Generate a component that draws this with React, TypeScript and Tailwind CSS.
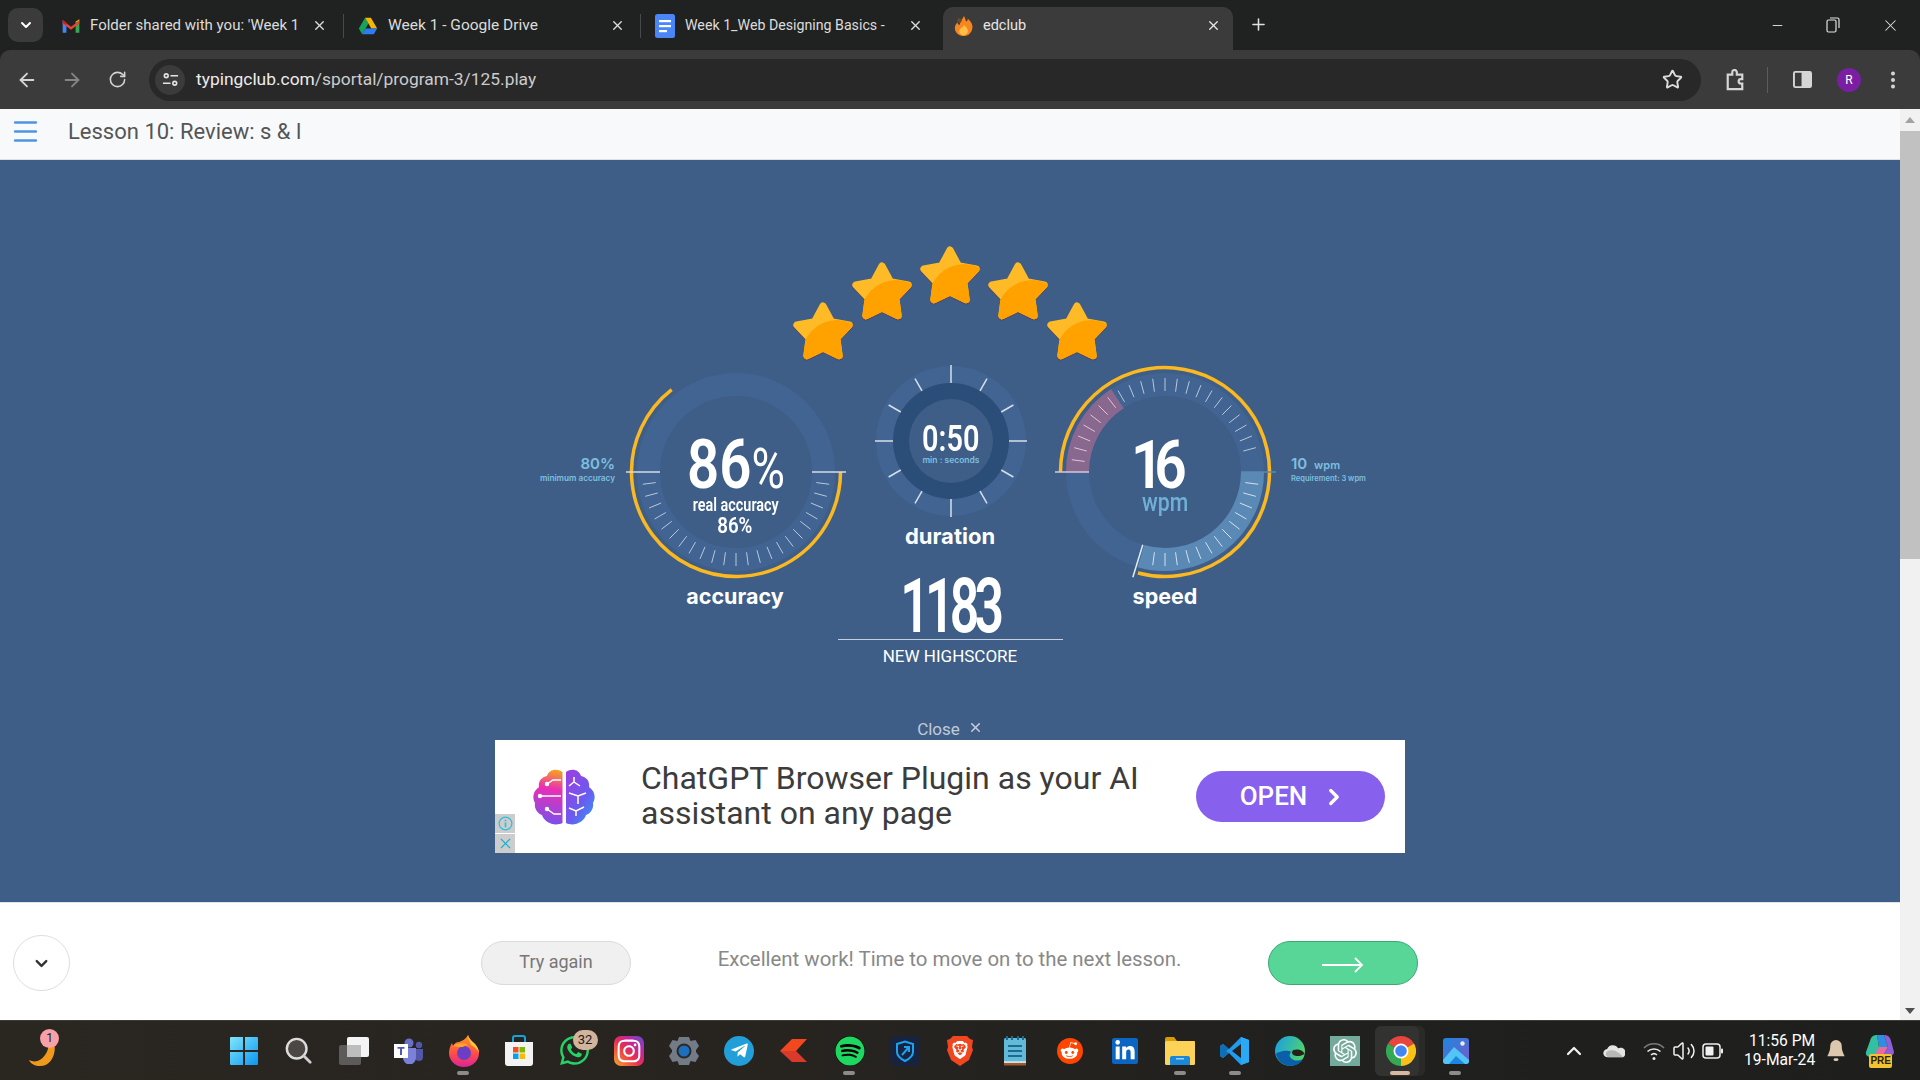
import { ArrowLeft, ArrowRight, ChevronDown, ChevronRight, ChevronUp, EllipsisVertical, Menu, Minus, Plus, RotateCw, Star, Volume2, X } from 'lucide-react';
import { FaInstagram, FaLinkedinIn, FaRedditAlien, FaSpotify, FaTelegramPlane, FaWhatsapp } from 'react-icons/fa';
import { SiBrave, SiOpenai } from 'react-icons/si';
import type { ReactNode } from 'react';

const pt = (cx: number, cy: number, r: number, deg: number) => {
  const a = (deg * Math.PI) / 180;
  return { x: cx + r * Math.cos(a), y: cy + r * Math.sin(a) };
};

const arc = (cx: number, cy: number, r: number, from: number, to: number) => {
  const a = pt(cx, cy, r, from);
  const b = pt(cx, cy, r, to);
  return `M${a.x} ${a.y}A${r} ${r} 0 ${to - from > 180 ? 1 : 0} 1 ${b.x} ${b.y}`;
};

function Tick({ cx, cy, r1, r2, deg, color, w = 1 }: { cx: number; cy: number; r1: number; r2: number; deg: number; color: string; w?: number }) {
  const a = pt(cx, cy, r1, deg);
  const b = pt(cx, cy, r2, deg);
  return <line x1={a.x} y1={a.y} x2={b.x} y2={b.y} stroke={color} strokeWidth={w} />;
}

const starPoints = () => {
  const out: string[] = [];
  for (let i = 0; i < 10; i++) {
    const p = pt(30, 31.5, i % 2 ? 14.5 : 27.5, -90 + i * 36);
    out.push(`${p.x},${p.y}`);
  }
  return out.join(' ');
};

function RatingStar({ id }: { id: string }) {
  const points = starPoints();
  return (
    <svg viewBox="0 0 60 58" className="h-[58px] w-[60px] overflow-visible">
      <defs>
        <mask id={id}>
          <polygon points={points} fill="#fff" stroke="#fff" strokeWidth="7" strokeLinejoin="round" />
        </mask>
      </defs>
      <polygon points={points} fill="#5a3f5c" stroke="#5a3f5c" strokeWidth="7" strokeLinejoin="round" transform="translate(0 1.2)" />
      <polygon points={points} fill="#ffbb27" stroke="#ffbb27" strokeWidth="7" strokeLinejoin="round" />
      <circle cx="44" cy="53" r="35" fill="#ffa200" mask={`url(#${id})`} />
    </svg>
  );
}

function AccuracyGauge() {
  const cx = 114;
  const cy = 113;
  const ticks = Array.from({ length: 23 }, (_, i) => 7.5 + i * 7.5);
  return (
    <svg viewBox="0 0 226 226" className="h-[226px] w-[226px]">
      <circle cx={cx} cy={cy} r="87.5" fill="none" stroke="#416492" strokeWidth="23" />
      {ticks.map((d) => (
        <Tick key={d} cx={cx} cy={cy} r1={81} r2={94} deg={d} color="#b9c8da" />
      ))}
      <path d={arc(cx, cy, 104.5, 0, 232)} fill="none" stroke="#fbb821" strokeWidth="3.5" />
      <line x1={cx - 110} y1={cy} x2={cx - 76} y2={cy} stroke="#d5dce6" strokeWidth="1.5" />
      <line x1={cx + 76} y1={cy} x2={cx + 110} y2={cy} stroke="#d5dce6" strokeWidth="1.5" />
    </svg>
  );
}

function SpeedGauge() {
  const cx = 113;
  const cy = 113;
  const pinkTicks = [187.5, 195, 202.5, 210, 217.5, 225, 232.5];
  const upper = Array.from({ length: 15 }, (_, i) => 240 + i * 7.5);
  const lower = Array.from({ length: 13 }, (_, i) => 7.5 + i * 7.5);
  return (
    <svg viewBox="0 0 226 226" className="h-[226px] w-[226px]">
      <circle cx={cx} cy={cy} r="87.5" fill="none" stroke="#416492" strokeWidth="23" />
      <path d={arc(cx, cy, 87.5, 180, 237)} fill="none" stroke="#89688f" strokeWidth="23" />
      <path d={arc(cx, cy, 87.5, 0, 106)} fill="none" stroke="#5a89b5" strokeWidth="23" />
      {pinkTicks.map((d) => (
        <Tick key={d} cx={cx} cy={cy} r1={81} r2={94} deg={d} color="#e3c4d4" />
      ))}
      {upper.map((d) => (
        <Tick key={d} cx={cx} cy={cy} r1={81} r2={94} deg={d} color="#b9c8da" />
      ))}
      {lower.map((d) => (
        <Tick key={d} cx={cx} cy={cy} r1={81} r2={94} deg={d} color="#d5e0ea" />
      ))}
      <path d={arc(cx, cy, 104.5, 180, 465)} fill="none" stroke="#fbb821" strokeWidth="3.5" />
      <line x1={cx - 110} y1={cy} x2={cx - 76} y2={cy} stroke="#d9c9d4" strokeWidth="1.5" />
      <line x1={cx + 76} y1={cy} x2={cx + 111} y2={cy} stroke="#5a89b5" strokeWidth="1.5" />
      <Tick cx={cx} cy={cy} r1={76} r2={110} deg={107} color="#e6ebf1" w={1.5} />
    </svg>
  );
}

function DurationRing() {
  const ticks = Array.from({ length: 12 }, (_, i) => i * 30);
  return (
    <svg viewBox="0 0 166 166" className="h-[166px] w-[166px]">
      <circle cx="84" cy="82" r="75" fill="#416492" />
      <circle cx="84" cy="82" r="58" fill="#2a4e78" />
      <circle cx="84" cy="82" r="42" fill="#3e5e87" />
      {ticks.map((d) => (
        <Tick key={d} cx={84} cy={82} r1={58} r2={d % 90 === 0 ? 76 : 72} deg={d} color="#d7dfe9" w={1.5} />
      ))}
    </svg>
  );
}

function GmailIcon() {
  return (
    <svg viewBox="0 0 24 24" className="h-5 w-5">
      <path d="M2 5.500V20h4.500V9Z" fill="#4285f4" />
      <path d="M22 5.500V20h-4.500V9Z" fill="#34a853" />
      <path d="M2 5.500 12 13l10-7.500V9l-10 7.500L2 9Z" fill="#ea4335" />
      <path d="M17.500 8.500 22 5.500V3.800L17.500 7Z" fill="#fbbc04" />
      <path d="M2 8V4.500l4.500 3.300V11Z" fill="#c5221f" />
    </svg>
  );
}

function DriveIcon() {
  return (
    <svg viewBox="0 0 24 24" className="h-5 w-5">
      <polygon points="8.5,2 1,15 5,22 12.5,9" fill="#16a45a" />
      <polygon points="8.5,2 15.5,2 23,15 16,15" fill="#f6b704" />
      <polygon points="5,22 19,22 23,15 9,15" fill="#2f7bf0" />
    </svg>
  );
}

function DocsIcon() {
  return (
    <svg viewBox="0 0 20 24" className="h-[24px] w-[20px]">
      <rect width="20" height="24" rx="2.5" fill="#4a86f5" />
      <rect x="4" y="6" width="12" height="2.2" fill="#fff" />
      <rect x="4" y="11" width="12" height="2.2" fill="#fff" />
      <rect x="4" y="16" width="8" height="2.2" fill="#fff" />
    </svg>
  );
}

function FlameIcon() {
  return (
    <svg viewBox="0 0 24 24" className="h-[22px] w-[22px]">
      <path d="M12 1c2 3 1 5 3 6 1-1 1-2 1-3 4 3 6 7 5 11-1 5-5 8-9 8s-9-2-10-8c0-3 1-5 3-7 0 2 1 3 2 3 1-4 3-6 5-10Z" fill="#f7861e" />
      <path d="M12 11c2 2 5 4 4 8-1 2-3 3-5 3-3 0-5-3-4-5 1-3 4-3 5-6Z" fill="#ffc04a" />
      <circle cx="7" cy="6" r="2.5" fill="#6b4a2e" />
    </svg>
  );
}

function TabBar() {
  return (
    <div className="flex h-[50px] shrink-0 items-end bg-[#202221]">
      <div className="ml-2 mr-[7px] mb-2 flex h-[34px] w-[35px] items-center justify-center rounded-[10px] bg-[#3b3b3b] text-white">
        <ChevronDown size={16} strokeWidth={3} />
      </div>
      <div className="flex h-[43px] items-center pb-[6px]">
        <div className="flex h-[24px] w-[294px] items-center border-r border-[#474a49] pl-[11px]">
          <span className="flex w-[29px] shrink-0 items-center"><GmailIcon /></span>
          <span className="w-[208px] overflow-hidden whitespace-nowrap text-[15px] text-[#dcdcdc]">Folder shared with you: 'Week 1</span>
          <span className="ml-auto mr-[16px] text-[#dcdcdc]"><X size={15} strokeWidth={2.2} /></span>
        </div>
        <div className="flex h-[24px] w-[297px] items-center border-r border-[#474a49] pl-[14px]">
          <span className="flex w-[30px] shrink-0 items-center"><DriveIcon /></span>
          <span className="whitespace-nowrap text-[15.5px] text-[#dcdcdc]">Week 1 - Google Drive</span>
          <span className="ml-auto mr-[15px] text-[#dcdcdc]"><X size={15} strokeWidth={2.2} /></span>
        </div>
        <div className="flex h-[24px] w-[297px] items-center pl-[14px]">
          <span className="flex w-[30px] shrink-0 items-center"><DocsIcon /></span>
          <span className="w-[210px] overflow-hidden whitespace-nowrap text-[14.2px] text-[#dcdcdc]">Week 1_Web Designing Basics -</span>
          <span className="ml-auto mr-[15px] text-[#dcdcdc]"><X size={15} strokeWidth={2.2} /></span>
        </div>
      </div>
      <div className="relative ml-[5px] flex h-[43px] w-[290px] items-center rounded-t-[10px] bg-[#3b3b3b] pb-[6px] pl-[10px]">
        <span className="w-[30px]"><FlameIcon /></span>
        <span className="text-[14.5px] text-[#e6e6e6]">edclub</span>
        <span className="ml-auto mr-[12px] text-[#e6e6e6]"><X size={15} strokeWidth={2.2} /></span>
      </div>
      <div className="ml-[16px] mb-[9px] flex h-[34px] items-center text-[#e0e0e0]">
        <Plus size={19} strokeWidth={2} />
      </div>
      <div className="ml-auto mb-[8px] flex h-[34px] items-center text-[#e0e0e0]">
        <Minus size={15} strokeWidth={1.5} />
        <svg viewBox="0 0 14 16" className="ml-[41px] h-[16px] w-[14px]" fill="none" stroke="currentColor" strokeWidth="1.2">
          <rect x="1" y="3" width="9" height="12" rx="1.5" />
          <path d="M4 1h7.500A1.500 1.500 0 0 1 13 2.500V11" />
        </svg>
        <span className="ml-[41px] mr-[20px]"><X size={19} strokeWidth={1.3} /></span>
      </div>
    </div>
  );
}

function Toolbar() {
  return (
    <div className="flex h-[59px] shrink-0 items-center rounded-t-[10px] bg-[#3b3b3b]">
      <span className="ml-[16px] text-[#d4d4d4]"><ArrowLeft size={22} strokeWidth={2} /></span>
      <span className="ml-[23px] text-[#858585]"><ArrowRight size={22} strokeWidth={2} /></span>
      <span className="ml-[25px] text-[#d4d4d4]"><RotateCw size={19} strokeWidth={2} /></span>
      <div className="ml-[22px] flex h-[42px] w-[1552px] items-center rounded-full bg-[#282828]">
        <span className="ml-[6px] flex h-[30px] w-[30px] items-center justify-center rounded-full bg-[#3b3b3b]">
          <svg viewBox="0 0 18 18" className="h-[17px] w-[17px]" fill="none" stroke="#e4e4e4" strokeWidth="1.7">
            <circle cx="4.500" cy="5" r="2" />
            <path d="M9 5h8M1 13h8" />
            <circle cx="13.500" cy="13" r="2" />
          </svg>
        </span>
        <span className="ml-[11px] text-[17.4px] text-[#ececec]">
          typingclub.com<span className="text-[#cccccc]">/sportal/program-3/125.play</span>
        </span>
        <span className="ml-auto mr-[18px] text-[#dcdcdc]"><Star size={21} strokeWidth={2.2} /></span>
      </div>
      <svg viewBox="0 0 22 24" className="ml-[24px] h-[22px] w-[20px]" fill="none" stroke="#d6d6d6" strokeWidth="2.4">
        <path d="M3 6h5V3.500a2.500 2.500 0 0 1 5 0V6h6v5h-1.500a2.500 2.500 0 0 0 0 5H19v6H3Z" />
      </svg>
      <span className="ml-[22px] h-[26px] w-px bg-[#5c5c5c]" />
      <svg viewBox="0 0 20 20" className="ml-[25px] h-[19px] w-[19px]">
        <rect x="1" y="2" width="18" height="16" rx="1.5" fill="none" stroke="#d6d6d6" strokeWidth="2" />
        <rect x="9" y="2" width="10" height="16" fill="#d6d6d6" />
      </svg>
      <span className="ml-[25px] flex h-[24px] w-[24px] items-center justify-center rounded-full bg-[#7a1fa2] text-[12px] text-white">R</span>
      <span className="ml-[21px] text-[#d6d6d6]"><EllipsisVertical size={22} strokeWidth={2.4} /></span>
    </div>
  );
}

function BrainLogo() {
  return (
    <svg viewBox="0 0 64 58" className="h-[58px] w-[64px]">
      <defs>
        <linearGradient id="brainL" x1="0.7" y1="0" x2="0.6" y2="1">
          <stop offset="0" stopColor="#f6a21d" />
          <stop offset="0.35" stopColor="#ea2fb5" />
          <stop offset="1" stopColor="#7a50ea" />
        </linearGradient>
        <linearGradient id="brainR" x1="0.1" y1="0" x2="0.9" y2="1">
          <stop offset="0" stopColor="#9b3fe0" />
          <stop offset="0.6" stopColor="#6a5cf0" />
          <stop offset="1" stopColor="#2f9bf5" />
        </linearGradient>
      </defs>
      <path d="M30.500 4C25 0 17 1 15 8 9 9 6 14 7 19 1 23 0 30 3 35 2 41 6 46 10 47 12 54 22 59 30.500 55Z" fill="url(#brainL)" />
      <path d="M34 4C39 0 47 1 49 8 55 9 58 14 57 19 63 23 64 30 61 35 62 41 58 46 54 47 52 54 42 59 34 55Z" fill="url(#brainR)" />
      <g fill="none" stroke="#fff" strokeWidth="1.5">
        <path d="M15 16l6-4h8M8 28h21M15 41l7 5h7" />
        <path d="M42 9v5l-5 4M42 14l6 4M37 25l9 3 8-3M46 28v8M37 40l7 3 8-4M44 43v5" />
      </g>
      <g fill="#fff">
        <circle cx="15" cy="16" r="2.2" />
        <circle cx="8" cy="28" r="2.2" />
        <circle cx="15" cy="41" r="2.2" />
      </g>
    </svg>
  );
}

function ResultPanel() {
  return (
    <main className="flex flex-1 flex-col items-center bg-[#3e5e87]">
      <div className="flex pt-[85px]">
        <div className="mt-[57px]"><RatingStar id="s1" /></div>
        <div className="ml-[-1px] mt-[17px]"><RatingStar id="s2" /></div>
        <div className="ml-[8px] mt-[1px]"><RatingStar id="s3" /></div>
        <div className="ml-[8px] mt-[17px]"><RatingStar id="s4" /></div>
        <div className="ml-[-1px] mt-[57px]"><RatingStar id="s5" /></div>
      </div>

      <div className="-mt-px flex">
        <div className="w-[88px] pr-[7px] pt-[97px] text-right font-['Inter',sans-serif] font-semibold text-[#7cc0e0]">
          <div className="text-[15px] leading-[16px]">80%</div>
          <div className="mt-px whitespace-nowrap text-[8.2px] leading-[10px]">minimum accuracy</div>
        </div>

        <div className="w-[226px]">
          <div className="relative h-[226px]">
            <AccuracyGauge />
            <div className="absolute inset-0 flex flex-col items-center pl-[2px] pt-[76px] text-white">
              <div className="flex h-[60px] scale-x-[.83] items-baseline leading-[60px]">
                <span className="text-[68px] font-semibold">86</span>
                <span className="text-[55px] font-normal">%</span>
              </div>
              <div className="scale-x-[.8] whitespace-nowrap text-[18px] font-semibold leading-[20px]">real accuracy</div>
              <div className="pr-[2px] scale-x-[.85] text-[22px] font-semibold leading-[22px]">86%</div>
            </div>
          </div>
          <div className="-mt-[3px] text-center font-['Inter',sans-serif] text-[21.5px] font-bold leading-[28px] text-white">accuracy</div>
        </div>

        <div className="flex w-[204px] flex-col items-center">
          <div className="relative h-[166px] w-[166px]">
            <DurationRing />
            <div className="absolute inset-0 flex flex-col items-center pl-[2px] pt-[60px] text-white">
              <div className="scale-x-[.78] text-[37px] font-semibold leading-[40px]">0:50</div>
              <div className="-mt-[5px] whitespace-nowrap font-['Inter',sans-serif] text-[8.5px] font-semibold leading-[12px] text-[#7cc0e0]">min : seconds</div>
            </div>
          </div>
          <div className="-mt-[3px] text-center font-['Inter',sans-serif] text-[22px] font-bold leading-[28px] text-white">duration</div>
          <div className="mt-[24px] h-[66px] w-[225px] shrink-0 border-b border-[#c5d0de] text-center text-[76px] font-semibold leading-[64px] tracking-[-7px] text-white">
            <span className="inline-block scale-x-[.68]">1183</span>
          </div>
          <div className="mt-[6px] whitespace-nowrap text-[17px] leading-[20px] text-white">NEW HIGHSCORE</div>
        </div>

        <div className="w-[226px]">
          <div className="relative h-[226px]">
            <SpeedGauge />
            <div className="absolute inset-0 flex flex-col items-center pr-[22px] pt-[76px] text-white">
              <div className="scale-x-[.85] text-[67px] font-semibold leading-[60px] tracking-[-11px]">16</div>
              <div className="-mt-[5px] ml-[22px] scale-x-[.85] text-[25px] font-medium leading-[26px] text-[#6fb0d4]">wpm</div>
            </div>
          </div>
          <div className="-mt-[3px] text-center font-['Inter',sans-serif] text-[21.5px] font-bold leading-[28px] text-white">speed</div>
        </div>

        <div className="w-[88px] pl-[13px] pt-[97px] font-['Inter',sans-serif] font-semibold text-[#7cc0e0]">
          <div className="whitespace-nowrap text-[15px] leading-[16px]">10 <span className="ml-[3px] text-[11px]">wpm</span></div>
          <div className="mt-px whitespace-nowrap text-[7.5px] leading-[10px]">Requirement: 3 wpm</div>
        </div>
      </div>

      <div className="mt-[54px] flex h-[20px] items-center text-[17px] text-[#c0cbd9]">
        Close
        <span className="ml-[8px] -mt-[6px]"><X size={15} strokeWidth={2.5} /></span>
      </div>

      <div className="relative flex h-[113px] w-[910px] items-center bg-white">
        <div className="ml-[37px]"><BrainLogo /></div>
        <div className="ml-[45px] pb-[2px] text-[32px] leading-[35px] text-[#3c3c3c]">
          ChatGPT Browser Plugin as your AI
          <br />
          assistant on any page
        </div>
        <div className="ml-auto mr-[20px] flex h-[51px] w-[189px] items-center justify-center rounded-full bg-[#8760ee] pl-[6px] text-[26px] font-medium text-white">
          OPEN
          <span className="ml-[14px]"><ChevronRight size={26} strokeWidth={3} /></span>
        </div>
        <div className="absolute bottom-0 left-0 flex w-[20px] flex-col gap-px">
          <div className="flex h-[19px] items-center justify-center bg-[#cdcdcd]">
            <svg viewBox="0 0 16 16" className="h-[15px] w-[15px]" fill="none" stroke="#2cc0da" strokeWidth="1.3">
              <circle cx="8" cy="8" r="6.800" />
              <path d="M8 7v5M8 4v1.600" strokeWidth="1.800" />
            </svg>
          </div>
          <div className="flex h-[19px] items-center justify-center bg-[#cdcdcd] text-[#12b4d4]">
            <X size={17} strokeWidth={1.6} />
          </div>
        </div>
      </div>
    </main>
  );
}

function BottomBar() {
  return (
    <div className="flex h-[118px] shrink-0 items-center border-t border-[#e2e2e2] bg-white pl-[13px] pr-[482px] pt-[3px]">
      <div className="flex h-[56px] w-[57px] items-center justify-center rounded-full border border-[#dedede] text-[#333]">
        <ChevronDown size={19} strokeWidth={3} />
      </div>
      <div className="ml-[411px] flex h-[44px] w-[150px] items-center justify-center rounded-full border border-[#dadada] bg-[#f0f0f0] pb-[4px] text-[18px] text-[#777]">
        Try again
      </div>
      <div className="-mt-[8px] flex-1 text-center text-[20.4px] text-[#888]">
        Excellent work! Time to move on to the next lesson.
      </div>
      <div className="flex h-[44px] w-[150px] items-center justify-center rounded-full border border-[#3ba878] bg-[#58d698] text-white">
        <svg viewBox="0 0 42 16" className="mt-[3px] h-[16px] w-[42px]" fill="none" stroke="#fff" strokeWidth="1.8">
          <path d="M0 8h40M33 1l7 7-7 7" />
        </svg>
      </div>
    </div>
  );
}

function Slot({ children, dot }: { children: ReactNode; dot?: boolean }) {
  return (
    <div className="relative flex h-[60px] w-[55.1px] shrink-0 items-center justify-center">
      {children}
      {dot && <span className="absolute bottom-[6px] left-[21px] h-[4px] w-[12px] rounded-full bg-[#8c8c8c]" />}
    </div>
  );
}

function TaskIcons() {
  return (
    <>
      <Slot>
        <svg viewBox="0 0 30 30" className="h-[30px] w-[30px]">
          <defs>
            <linearGradient id="winG" x1="0" y1="0" x2="1" y2="1">
              <stop offset="0" stopColor="#7fe6fb" />
              <stop offset="1" stopColor="#0b96f0" />
            </linearGradient>
          </defs>
          <path d="M1 2a1 1 0 0 1 1-1h12v13H1Zm15-1h12a1 1 0 0 1 1 1v12H16ZM1 16h13v13H2a1 1 0 0 1-1-1Zm15 0h13v12a1 1 0 0 1-1 1H16Z" fill="url(#winG)" />
        </svg>
      </Slot>
      <Slot>
        <svg viewBox="0 0 30 30" className="h-[28px] w-[28px]">
          <circle cx="12.500" cy="12.500" r="10.500" fill="#4a4745" stroke="#dcdcdc" strokeWidth="2.600" />
          <path d="M20 20l7 7" stroke="#cfcfcf" strokeWidth="3" strokeLinecap="round" />
        </svg>
      </Slot>
      <Slot>
        <svg viewBox="0 0 32 30" className="h-[30px] w-[32px]">
          <rect x="1" y="9" width="22" height="20" rx="2" fill="#5c5b59" />
          <rect x="9" y="1" width="22" height="20" rx="2" fill="#f4f4f4" />
          <rect x="9" y="9" width="14" height="12" fill="#bdbdbd" />
        </svg>
      </Slot>
      <Slot>
        <svg viewBox="0 0 30 26" className="h-[26px] w-[30px]">
          <circle cx="15" cy="5" r="4.500" fill="#6a6fc6" />
          <circle cx="25" cy="7" r="3.200" fill="#5257a8" />
          <path d="M21 11h8v8a4 4 0 0 1-8 0Z" fill="#5257a8" />
          <path d="M9 10h13v10a6.500 6.500 0 0 1-13 0Z" fill="#7b80d8" />
          <rect x="0" y="6" width="14" height="14" fill="#fff" />
          <path d="M3.500 9h7v1.800H8V17H6v-6.200H3.500Z" fill="#5057b5" />
        </svg>
      </Slot>
      <Slot dot>
        <svg viewBox="0 0 30 32" className="h-[32px] w-[30px]">
          <defs>
            <linearGradient id="foxG" x1="0.5" y1="0" x2="0.5" y2="1">
              <stop offset="0" stopColor="#ff9a1f" />
              <stop offset="0.6" stopColor="#ff4a4a" />
              <stop offset="1" stopColor="#d9249b" />
            </linearGradient>
          </defs>
          <path d="M19 0c1 4 4 6 7 9 3 3 4 7 4 9 0 8-7 14-15 14S0 26 0 18c0-3 1-7 3-10l1 3c1-2 3-4 6-4 3-1 7-3 9-7Z" fill="url(#foxG)" />
          <path d="M19 0c1 4 4 6 7 9 3 3 4 7 4 9-1-3-4-6-8-8-1-3-3-6-3-10Z" fill="#ffc53a" />
          <circle cx="15" cy="18" r="7" fill="#6b3fc4" />
          <path d="M4 11c4-3 12-4 16 0-3-1-5 0-6 1-3 0-6 0-10-1Z" fill="#ffa52a" />
        </svg>
      </Slot>
      <Slot>
        <svg viewBox="0 0 30 32" className="h-[32px] w-[30px]">
          <path d="M9 7V3a2 2 0 0 1 2-2h8a2 2 0 0 1 2 2v4" fill="none" stroke="#16a3dc" strokeWidth="2" />
          <path d="M1 7h28v21a3 3 0 0 1-3 3H4a3 3 0 0 1-3-3Z" fill="#f3f3f3" />
          <rect x="9" y="12" width="5.500" height="5.500" fill="#f25022" />
          <rect x="15.500" y="12" width="5.500" height="5.500" fill="#7fba00" />
          <rect x="9" y="18.500" width="5.500" height="5.500" fill="#00a4ef" />
          <rect x="15.500" y="18.500" width="5.500" height="5.500" fill="#ffb900" />
        </svg>
      </Slot>
      <Slot>
        <span className="text-[#25d366]"><FaWhatsapp size={33} /></span>
        <span className="absolute left-[26px] top-[9px] flex h-[20px] w-[25px] items-center justify-center rounded-full bg-[#d2b49c] text-[13px] text-[#1b1b1b]">32</span>
      </Slot>
      <Slot>
        <span className="flex h-[30px] w-[30px] items-center justify-center rounded-[7px] bg-[linear-gradient(45deg,#f9a72a,#e8304f_45%,#c2259c_70%,#5b51d8)] text-white">
          <FaInstagram size={26} />
        </span>
      </Slot>
      <Slot>
        <svg viewBox="0 0 32 30" className="h-[30px] w-[32px]">
          <path d="M11 1h10l1.500 4 5-1 3.500 6-3 4v2l3 4-3.500 6-5-1L21 29H11l-1.500-4-5 1L1 20l3-4v-2l-3-4 3.500-6 5 1Z" fill="#727b86" />
          <circle cx="16" cy="15" r="7.500" fill="#2c2a27" />
          <circle cx="16" cy="15" r="5.500" fill="#1d6fc0" />
        </svg>
      </Slot>
      <Slot>
        <span className="flex h-[30px] w-[30px] items-center justify-center rounded-full bg-[#229ed9] text-white">
          <FaTelegramPlane size={19} />
        </span>
      </Slot>
      <Slot>
        <svg viewBox="0 0 28 24" className="h-[24px] w-[28px]">
          <polygon points="0,12 12,0 27,0 16,12" fill="#f2481f" />
          <polygon points="0,12 16,12 27,23 12,23" fill="#d93a2b" />
        </svg>
      </Slot>
      <Slot dot>
        <span className="flex h-[30px] w-[30px] items-center justify-center rounded-full bg-black text-[#1ed760]">
          <FaSpotify size={30} />
        </span>
      </Slot>
      <Slot>
        <span className="flex h-[30px] w-[30px] items-center justify-center rounded-[6px] bg-[#182340]">
          <svg viewBox="0 0 20 22" className="h-[22px] w-[20px]" fill="none" stroke="#1aa4ef" strokeWidth="2">
            <path d="M2 4l8-2.500L18 4v8c0 4-4 7-8 9-4-2-8-5-8-9Z" />
            <path d="M7 15l7-8M9 7h5v5" />
          </svg>
        </span>
      </Slot>
      <Slot>
        <svg viewBox="0 0 28 32" className="h-[32px] w-[28px]">
          <path d="M7 1h14l3 3 3 1-1 7 1 3-4 10-9 6-9-6-4-10 1-3-1-7 3-1Z" fill="#f0471f" />
          <foreignObject x="5" y="6" width="18" height="18">
            <span className="text-white"><SiBrave size={18} /></span>
          </foreignObject>
        </svg>
      </Slot>
      <Slot>
        <svg viewBox="0 0 22 30" className="h-[30px] w-[22px]">
          <rect x="0" y="2" width="22" height="27" rx="1.500" fill="#62bad8" />
          <rect x="0" y="26.500" width="22" height="3" fill="#a0592c" />
          <rect x="0" y="25.500" width="22" height="1.200" fill="#fff" />
          <path d="M4 10h14M4 15h14M4 20h14" stroke="#1b6b92" strokeWidth="2" />
          <path d="M3 0v4M8 0v4M14 0v4M19 0v4" stroke="#1b6b92" strokeWidth="2" />
        </svg>
      </Slot>
      <Slot>
        <span className="flex h-[26px] w-[26px] items-center justify-center rounded-full bg-[#ff4500] text-white">
          <FaRedditAlien size={19} />
        </span>
      </Slot>
      <Slot>
        <span className="flex h-[26px] w-[26px] items-center justify-center rounded-[2px] bg-[#0a66c2] text-white">
          <FaLinkedinIn size={22} />
        </span>
      </Slot>
      <Slot dot>
        <svg viewBox="0 0 30 28" className="h-[28px] w-[30px]">
          <path d="M0 2a2 2 0 0 1 2-2h7l3 4h18v4H0Z" fill="#d99a08" />
          <rect y="4" width="30" height="24" rx="1.500" fill="#fcd258" />
          <path d="M5 21a2 2 0 0 1 2-2h16a2 2 0 0 1 2 2v7H5Z" fill="#1b87d8" />
          <rect x="11" y="21" width="8" height="1.500" fill="#fff" opacity=".6" />
        </svg>
      </Slot>
      <Slot dot>
        <svg viewBox="0 0 30 30" className="h-[30px] w-[30px]">
          <path d="M21 1 9 13 3 8 0 10v10l3 2 6-5 12 12 8-3V4Z" fill="#1f9cf0" />
          <path d="M21 1v28l8-3V4Z" fill="#2aaaf5" />
          <path d="M21 8 12 15l9 7Z" fill="#26211c" />
          <path d="M3 8l6 5-3 2 3 2-6 5-3-2V10Z" fill="#0f6fb5" />
        </svg>
      </Slot>
      <Slot>
        <svg viewBox="0 0 30 30" className="h-[30px] w-[30px]">
          <defs>
            <linearGradient id="edgeG" x1="0" y1="0.2" x2="1" y2="0.6">
              <stop offset="0" stopColor="#1aa0e0" />
              <stop offset="1" stopColor="#52d66a" />
            </linearGradient>
          </defs>
          <circle cx="15" cy="15" r="15" fill="url(#edgeG)" />
          <path d="M1 18c1 7 8 12 14 12 6 0 11-3 13-7-4 2-8 2-11 0-3-2-3-5-1-7-3-2-8-1-11 0-2 0-4 1-4 2Z" fill="#0b5ea8" />
          <path d="M29.500 18c-3 2-8 3-11 1-2-1-2-4 0-5 3-1 9-1 11 4Z" fill="#26211c" />
        </svg>
      </Slot>
      <Slot>
        <span className="flex h-[30px] w-[30px] items-center justify-center bg-[#74aa9c] text-white">
          <SiOpenai size={24} />
        </span>
      </Slot>
      <div className="relative flex h-[60px] w-[55.1px] shrink-0 items-center justify-center">
        <span className="absolute left-[8px] top-[5px] h-[50px] w-[44px] rounded-[6px] bg-[#2a2a28]" />
        <span className="absolute left-[2px] top-[5px] h-[50px] w-[44px] rounded-[6px] bg-[#323231]" />
        <svg viewBox="0 0 30 30" className="relative h-[30px] w-[30px]">
          <path d={arc(15, 15, 10, 210, 330)} fill="none" stroke="#e8453c" strokeWidth="10" />
          <path d={arc(15, 15, 10, 330, 450)} fill="none" stroke="#fbc116" strokeWidth="10" />
          <path d={arc(15, 15, 10, 90, 210)} fill="none" stroke="#34a853" strokeWidth="10" />
          <circle cx="15" cy="15" r="7.500" fill="#fff" />
          <circle cx="15" cy="15" r="5.800" fill="#4285f4" />
        </svg>
        <span className="absolute bottom-[6px] left-[17px] h-[4px] w-[20px] rounded-full bg-[#d6b9a0]" />
      </div>
      <Slot dot>
        <svg viewBox="0 0 26 26" className="h-[26px] w-[26px]">
          <defs>
            <linearGradient id="photoG" x1="0" y1="0" x2="1" y2="1">
              <stop offset="0" stopColor="#1b87e0" />
              <stop offset="1" stopColor="#7a5ac8" />
            </linearGradient>
          </defs>
          <rect width="26" height="26" rx="3" fill="url(#photoG)" />
          <circle cx="19.500" cy="5.500" r="2.200" fill="#e6eefa" />
          <path d="M0 22l11-13 15 13v1a3 3 0 0 1-3 3H3a3 3 0 0 1-3-3Z" fill="#52c4f5" />
          <path d="M6 26l7-8 9 8Z" fill="#1b87e0" />
        </svg>
      </Slot>
    </>
  );
}

function Taskbar() {
  return (
    <footer className="flex h-[60px] shrink-0 items-center border-t border-[#3d3c39] bg-[linear-gradient(90deg,#2a2620,#272420_40%,#20201e_70%,#1e1e1d)]">
      <div className="relative ml-[14px] flex h-[60px] w-[55px] items-center justify-center">
        <svg viewBox="0 0 28 34" className="h-[34px] w-[28px]">
          <path d="M26 8c3 12-3 24-14 24-5 0-9-2-11-6 6 3 12 1 16-5 3-4 4-9 3-13Z" fill="#ef9a1c" />
        </svg>
        <span className="absolute left-[26px] top-[8px] flex h-[19px] w-[19px] items-center justify-center rounded-full bg-[#f7a0a8] text-[12px] text-[#1b1b1b]">1</span>
      </div>
      <div className="ml-[147px] flex">
        <TaskIcons />
      </div>
      <div className="ml-[79px] flex h-full items-center text-[#f2f2f2]">
        <span className="w-[24px]"><ChevronUp size={24} strokeWidth={2.2} /></span>
        <svg viewBox="0 0 32 20" className="ml-[17px] h-[14px] w-[22px]">
          <path d="M7 19a6 6 0 0 1-1-12 9 9 0 0 1 16-1 6.500 6.500 0 0 1 7 13Z" fill="#e4e4e4" />
          <path d="M7 19a5 5 0 0 1 0-9c5-2 14-2 22 9Z" fill="#9b9b9b" opacity=".6" />
        </svg>
        <svg viewBox="0 0 24 20" className="ml-[17px] h-[20px] w-[24px]" fill="none" stroke="#e8e8e8" strokeWidth="1.600">
          <path d="M2 7a14 14 0 0 1 20 0" stroke="#7a7a7a" />
          <path d="M5.500 10.500a9.500 9.500 0 0 1 13 0" />
          <path d="M9 14a4.500 4.500 0 0 1 6 0" />
          <circle cx="12" cy="17.500" r="1.500" fill="#e8e8e8" stroke="none" />
        </svg>
        <span className="ml-[6px] w-[24px]"><Volume2 size={24} strokeWidth={1.500} /></span>
        <svg viewBox="0 0 22 16" className="ml-[6px] h-[16px] w-[22px]">
          <rect x="1" y="1" width="17" height="14" rx="3" fill="none" stroke="#f0f0f0" strokeWidth="1.500" />
          <rect x="3.500" y="3.500" width="8" height="9" rx="1" fill="#f0f0f0" />
          <rect x="19" y="5.500" width="2" height="5" rx="1" fill="#f0f0f0" />
        </svg>
        <div className="ml-[9px] w-[82px] whitespace-nowrap text-right text-[15.6px] leading-[19px] text-white">
          <div>11:56 PM</div>
          <div>19-Mar-24</div>
        </div>
        <svg viewBox="0 0 18 24" className="ml-[12px] h-[23px] w-[18px]">
          <path d="M9 1a6 6 0 0 1 6 6c0 6 2 8 3 11H0c1-3 3-5 3-11a6 6 0 0 1 6-6Z" fill="#dcc8ae" />
          <rect x="6.500" y="20" width="5" height="3" rx="1.500" fill="#dcc8ae" />
        </svg>
        <div className="relative ml-[20px] h-[34px] w-[30px]">
          <svg viewBox="0 0 30 26" className="h-[26px] w-[30px]">
            <path d="M12 1h7l4 12h-9Z" fill="#2e8fe0" />
            <path d="M19 1c4 0 6 2 7 6l3 11c0 3-3 4-6 4h-5l5-9Z" fill="#8f5fd8" />
            <path d="M12 1C8 1 6 3 5 7L1 18c-1 3 2 5 5 5h6l2-10Z" fill="#33bfa0" />
            <path d="M14 13h9l-5 9H9Z" fill="#e86aa0" />
          </svg>
          <span className="absolute bottom-0 left-[4px] flex h-[14px] w-[23px] items-center justify-center rounded-[2px] bg-[#f2c230] font-['Liberation_Sans',sans-serif] text-[10px] font-bold leading-none text-[#2b2200]">PRE</span>
        </div>
      </div>
    </footer>
  );
}

function PageScrollbar() {
  return (
    <div className="flex w-5 shrink-0 flex-col items-center bg-[#f1f1f1]">
      <span className="mt-[8px] h-0 w-0 border-x-[5px] border-b-[6px] border-x-transparent border-b-[#a3a3a3]" />
      <span className="mt-[8px] h-[428px] w-full bg-[#c1c1c1]" />
      <span className="mt-auto mb-[6px] h-0 w-0 border-x-[5px] border-t-[6px] border-x-transparent border-t-[#505050]" />
    </div>
  );
}

export default function App() {
  return (
    <div className="flex h-screen w-screen flex-col overflow-hidden bg-[#202221] font-['Roboto',sans-serif]">
      <TabBar />
      <Toolbar />
      <div className="flex min-h-0 flex-1">
        <div className="flex min-w-0 flex-1 flex-col">
          <header className="flex h-[51px] shrink-0 items-center border-b border-[#dde1e6] bg-[#f8f9fb] pb-[5px]">
            <span className="ml-[10px] text-[#4f94e2]"><Menu size={31} strokeWidth={2} /></span>
            <span className="ml-[27px] text-[22px] text-[#555]">Lesson 10: Review: s &amp; l</span>
          </header>
          <ResultPanel />
          <BottomBar />
        </div>
        <PageScrollbar />
      </div>
      <Taskbar />
    </div>
  );
}
